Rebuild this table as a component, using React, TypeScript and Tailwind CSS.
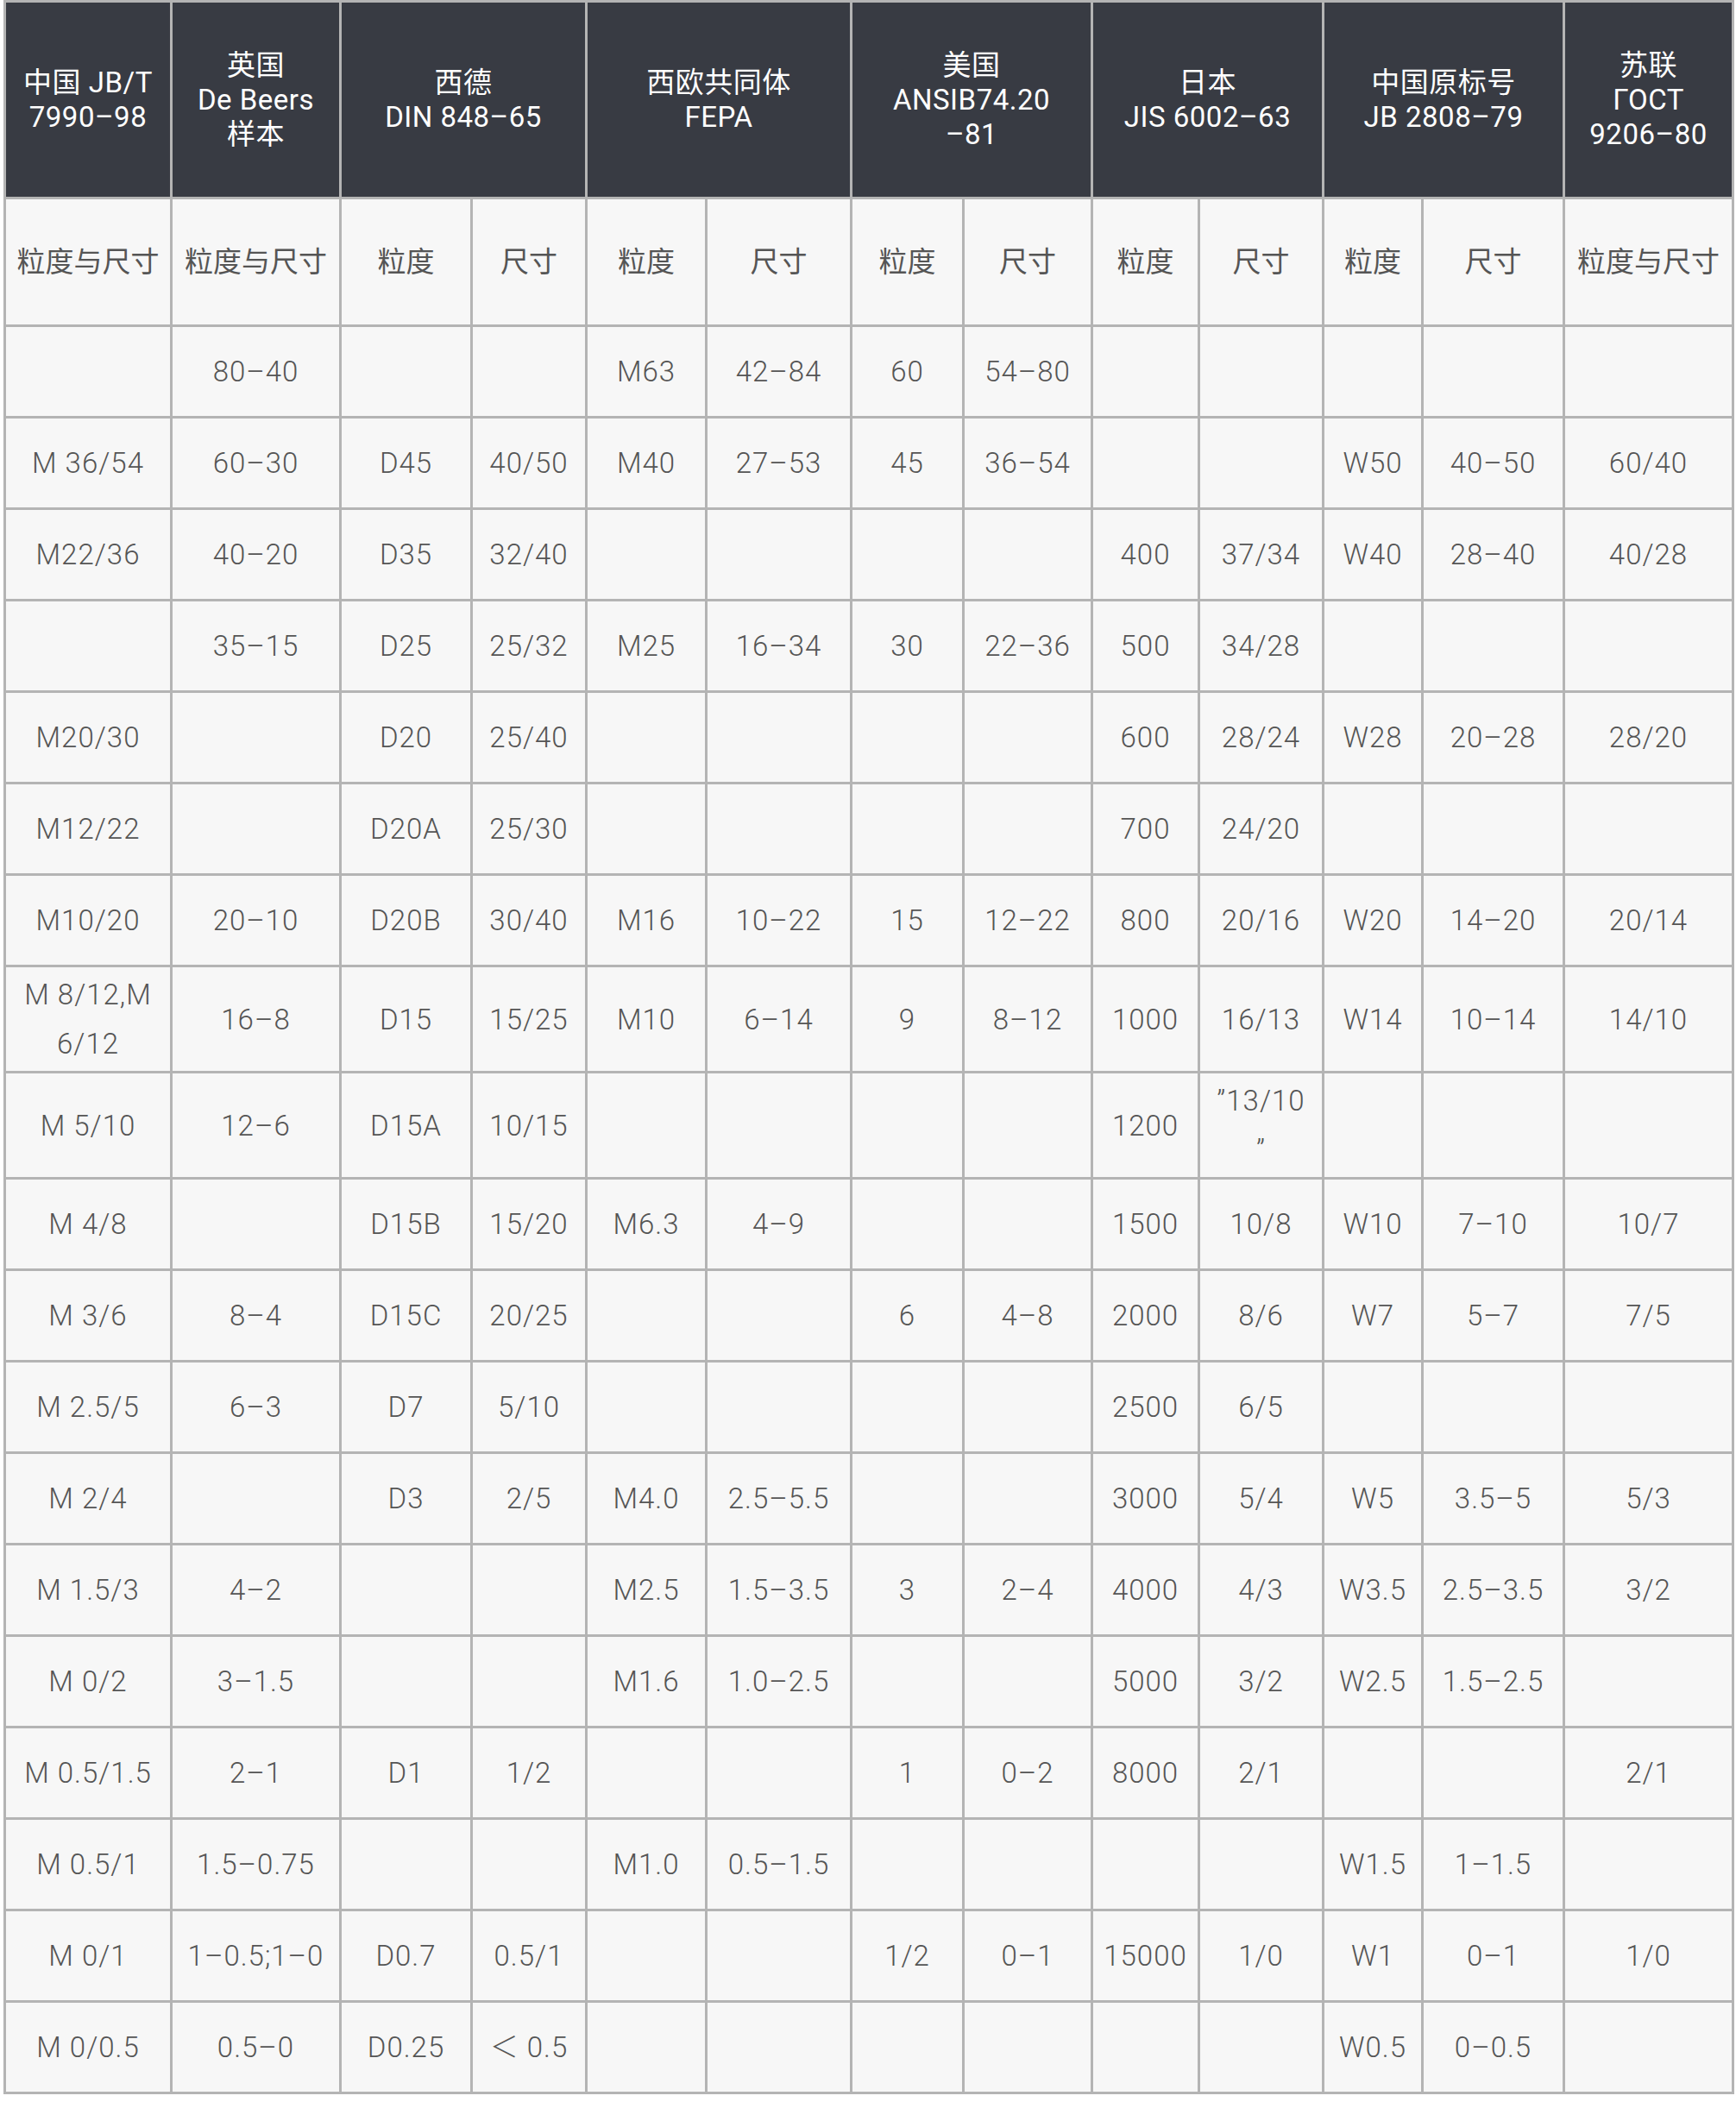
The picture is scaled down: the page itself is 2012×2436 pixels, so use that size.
import React from "react";

// 各国金刚石微粉粒度对照表
const colWidths = [193, 196, 152, 133, 139, 168, 130, 149, 124, 144, 115, 164, 196];

const headers: { lines: string[]; span: number }[] = [
  { lines: ["中国 JB/T", "7990–98"], span: 1 },
  { lines: ["英国", "De Beers", "样本"], span: 1 },
  { lines: ["西德", "DIN 848–65"], span: 2 },
  { lines: ["西欧共同体", "FEPA"], span: 2 },
  { lines: ["美国", "ANSIB74.20", "–81"], span: 2 },
  { lines: ["日本", "JIS 6002–63"], span: 2 },
  { lines: ["中国原标号", "JB 2808–79"], span: 2 },
  { lines: ["苏联", "ГОСТ", "9206–80"], span: 1 },
];

const subHeaders = [
  "粒度与尺寸",
  "粒度与尺寸",
  "粒度",
  "尺寸",
  "粒度",
  "尺寸",
  "粒度",
  "尺寸",
  "粒度",
  "尺寸",
  "粒度",
  "尺寸",
  "粒度与尺寸",
];

// 两行的单元格用 "\n" 分行
const rows: string[][] = [
  ["", "80–40", "", "", "M63", "42–84", "60", "54–80", "", "", "", "", ""],
  ["M 36/54", "60–30", "D45", "40/50", "M40", "27–53", "45", "36–54", "", "", "W50", "40–50", "60/40"],
  ["M22/36", "40–20", "D35", "32/40", "", "", "", "", "400", "37/34", "W40", "28–40", "40/28"],
  ["", "35–15", "D25", "25/32", "M25", "16–34", "30", "22–36", "500", "34/28", "", "", ""],
  ["M20/30", "", "D20", "25/40", "", "", "", "", "600", "28/24", "W28", "20–28", "28/20"],
  ["M12/22", "", "D20A", "25/30", "", "", "", "", "700", "24/20", "", "", ""],
  ["M10/20", "20–10", "D20B", "30/40", "M16", "10–22", "15", "12–22", "800", "20/16", "W20", "14–20", "20/14"],
  ["M 8/12,M\n6/12", "16–8", "D15", "15/25", "M10", "6–14", "9", "8–12", "1000", "16/13", "W14", "10–14", "14/10"],
  ["M 5/10", "12–6", "D15A", "10/15", "", "", "", "", "1200", "”13/10\n”", "", "", ""],
  ["M 4/8", "", "D15B", "15/20", "M6.3", "4–9", "", "", "1500", "10/8", "W10", "7–10", "10/7"],
  ["M 3/6", "8–4", "D15C", "20/25", "", "", "6", "4–8", "2000", "8/6", "W7", "5–7", "7/5"],
  ["M 2.5/5", "6–3", "D7", "5/10", "", "", "", "", "2500", "6/5", "", "", ""],
  ["M 2/4", "", "D3", "2/5", "M4.0", "2.5–5.5", "", "", "3000", "5/4", "W5", "3.5–5", "5/3"],
  ["M 1.5/3", "4–2", "", "", "M2.5", "1.5–3.5", "3", "2–4", "4000", "4/3", "W3.5", "2.5–3.5", "3/2"],
  ["M 0/2", "3–1.5", "", "", "M1.6", "1.0–2.5", "", "", "5000", "3/2", "W2.5", "1.5–2.5", ""],
  ["M 0.5/1.5", "2–1", "D1", "1/2", "", "", "1", "0–2", "8000", "2/1", "", "", "2/1"],
  ["M 0.5/1", "1.5–0.75", "", "", "M1.0", "0.5–1.5", "", "", "", "", "W1.5", "1–1.5", ""],
  ["M 0/1", "1–0.5;1–0", "D0.7", "0.5/1", "", "", "1/2", "0–1", "15000", "1/0", "W1", "0–1", "1/0"],
  ["M 0/0.5", "0.5–0", "D0.25", "＜ 0.5", "", "", "", "", "", "", "W0.5", "0–0.5", ""],
];

function Lines({ text }: { text: string }) {
  const parts = text.split("\n");
  return (
    <>
      {parts.map((p, i) => (
        <React.Fragment key={i}>
          {i > 0 && <br />}
          {p}
        </React.Fragment>
      ))}
    </>
  );
}

export default function App() {
  return (
    <div
      className="bg-white pl-[4px] w-[2012px] min-h-[2436px]"
      style={{ fontFamily: 'Roboto, "Noto Sans CJK SC", sans-serif' }}
    >
      <table className="table-fixed border-collapse w-[2003px] text-[33px] text-[#555555]">
        <colgroup>
          {colWidths.map((w, i) => (
            <col key={i} style={{ width: w }} />
          ))}
        </colgroup>
        <thead>
          <tr className="h-[228px] bg-[#383b43]">
            {headers.map((h, i) => (
              <th
                key={i}
                colSpan={h.span}
                className="border-[3px] border-[#b4b4b4] px-1 text-center align-middle font-normal text-white leading-[40px] tracking-[0.5px]"
              >
                {h.lines.map((l, j) => (
                  <div key={j}>{l}</div>
                ))}
              </th>
            ))}
          </tr>
        </thead>
        <tbody className="bg-[#f7f7f7]">
          <tr className="h-[148px]">
            {subHeaders.map((s, i) => (
              <td
                key={i}
                className="border-[3px] border-[#b4b4b4] px-1 text-center align-middle leading-[57px] whitespace-nowrap"
              >
                {s}
              </td>
            ))}
          </tr>
          {rows.map((r, i) => {
            const tall = r.some((c) => c.includes("\n"));
            return (
              <tr key={i} className={tall ? "h-[123px]" : "h-[106px]"}>
                {r.map((c, j) => (
                  <td
                    key={j}
                    className="border-[3px] border-[#b4b4b4] px-1 text-center align-middle font-light leading-[57px] whitespace-nowrap tracking-[1px]"
                  >
                    <Lines text={c} />
                  </td>
                ))}
              </tr>
            );
          })}
        </tbody>
      </table>
    </div>
  );
}
